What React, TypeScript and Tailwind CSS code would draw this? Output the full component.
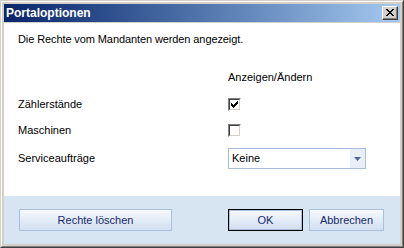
import React from "react";

function Checkbox({ checked }: { checked?: boolean }) {
  return (
    <div className="h-[13px] w-[13px] border border-t-[#808080] border-l-[#808080] border-b-white border-r-white">
      <div className="flex h-full w-full items-center justify-center border border-t-[#404040] border-l-[#404040] border-b-[#d4d0c8] border-r-[#d4d0c8] bg-white">
        {checked && (
          <svg width="7" height="7" viewBox="0 0 7 7">
            <path d="M0 2h1v1h1v1h1V3h1V2h1V1h1V0h1v3H6v1H5v1H4v1H3v1H2V6H1V5H0z" fill="#000" />
          </svg>
        )}
      </div>
    </div>
  );
}

function Button({ label, width, primary }: { label: string; width: string; primary?: boolean }) {
  return (
    <div className={`h-[22px] ${width} ${primary ? "border border-black" : "border border-[#a9bfdc]"}`}>
      <div
        className={`flex h-full w-full items-center justify-center bg-gradient-to-b from-[#f6f9fd] via-[#e3ecf7] to-[#d3e0f1] text-[11px] text-[#16296b] ${
          primary ? "border border-[#a9bfdc]" : ""
        }`}
      >
        {label}
      </div>
    </div>
  );
}

export default function App() {
  return (
    <div className="h-[248px] w-[404px] border border-t-[#d4d0c8] border-l-[#d4d0c8] border-b-[#404040] border-r-[#404040] font-['Liberation_Sans',Arial,sans-serif]">
      <div className="h-full w-full border border-t-white border-l-white border-b-[#808080] border-r-[#808080] bg-[#d4d0c8] p-[2px]">
        <div className="flex h-full flex-col">
          {/* Title bar */}
          <div className="flex h-[18px] items-center justify-between bg-gradient-to-r from-[#0a246a] to-[#a6caf0] pl-[2px] pr-[2px]">
            <span className="text-[12px] font-bold text-white">Portaloptionen</span>
            <div className="h-[14px] w-[16px] border border-t-white border-l-white border-b-[#404040] border-r-[#404040] bg-[#d4d0c8]">
              <div className="flex h-full w-full items-center justify-center border-r border-b border-[#808080]">
                <svg width="8" height="7" viewBox="0 0 8 7">
                  <path d="M0 0h2v1h1v1h2V1h1V0h2v1H7v1H6v1H5v1h1v1h1v1h1v1H6V6H5V5H3v1H2v1H0V6h1V5h1V4h1V3H2V2H1V1H0z" fill="#000" />
                </svg>
              </div>
            </div>
          </div>

          {/* Content */}
          <div className="mt-px flex-1 bg-white pl-[14px] pt-[10px] text-[11px] text-black">
            <div className="leading-[13px] tracking-[-0.1px]">Die Rechte vom Mandanten werden angezeigt.</div>
            <div className="mt-[25px] grid grid-cols-[210px_138px] items-center">
              <div />
              <div className="leading-[13px]">Anzeigen/Ändern</div>
              <div className="mt-[14px] leading-[13px]">Zählerstände</div>
              <div className="mt-[14px]">
                <Checkbox checked />
              </div>
              <div className="mt-[13px] leading-[13px]">Maschinen</div>
              <div className="mt-[13px]">
                <Checkbox />
              </div>
              <div className="mt-[11px] leading-[13px]">Serviceaufträge</div>
              <div className="mt-[11px] flex h-[21px] items-stretch border border-[#a7bddb] bg-white">
                <div className="flex flex-1 items-center pl-[3px]">Keine</div>
                <div className="flex w-[15px] items-center justify-center bg-[#e8eff9]">
                  <svg width="7" height="4" viewBox="0 0 7 4">
                    <path d="M0 0h7L3.5 4z" fill="#4c6a9a" />
                  </svg>
                </div>
              </div>
            </div>
          </div>

          {/* Footer */}
          <div className="flex h-[48px] items-start bg-[#d7e5f3] pl-[15px] pt-[13px]">
            <Button label="Rechte löschen" width="w-[153px]" />
            <div className="ml-[56px] flex gap-[6px]">
              <Button label="OK" width="w-[75px]" primary />
              <Button label="Abbrechen" width="w-[75px]" />
            </div>
          </div>
        </div>
      </div>
    </div>
  );
}
